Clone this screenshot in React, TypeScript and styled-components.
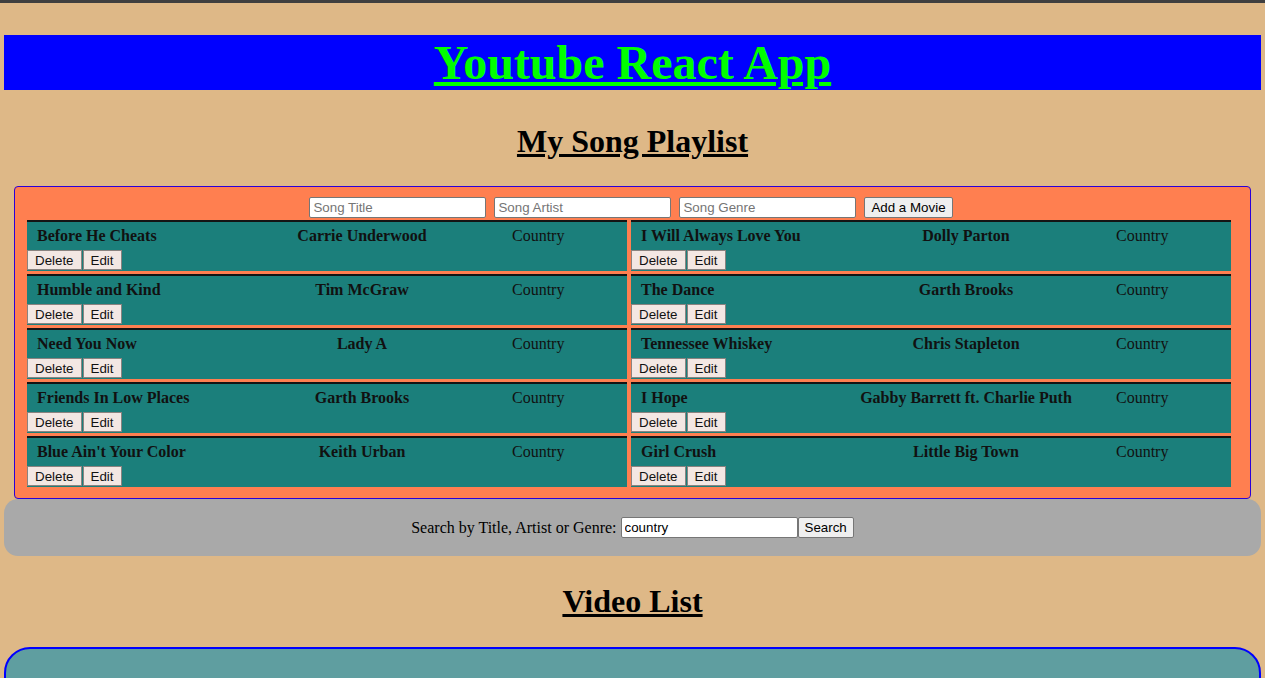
import { useState } from "react";
import styled, { createGlobalStyle } from "styled-components";

interface Song {
  title: string;
  artist: string;
  genre: string;
}

const GlobalStyle = createGlobalStyle`
  html, body {
    margin: 0;
    padding: 0;
    background: #deb887;
    font-family: "Liberation Serif", "Times New Roman", serif;
  }
`;

const TopEdge = styled.div`
  height: 3px;
  background: #3f3f3f;
`;

const Page = styled.div`
  padding: 32px 4px 0;
  display: flex;
  flex-direction: column;
`;

const Banner = styled.div`
  background: #0000ff;
  height: 55px;
  display: flex;
  align-items: center;
  justify-content: center;
`;

const BannerTitle = styled.h1`
  margin: 0;
  color: #00ff00;
  font-size: 48px;
  font-weight: 700;
  text-decoration: underline;
  line-height: 55px;
`;

const SectionTitle = styled.h2<{ $top: number; $bottom: number }>`
  margin: ${(p) => p.$top}px 0 ${(p) => p.$bottom}px;
  text-align: center;
  font-size: 32px;
  font-weight: 700;
  text-decoration: underline;
  line-height: 36px;
  color: #000;
`;

const Playlist = styled.div`
  margin: 0 10px;
  background: #ff7f50;
  border: 1px solid #2a00d8;
  border-radius: 4px;
  padding: 10px 15px 11px 12px;
  display: flex;
  flex-direction: column;
  gap: 2px;
`;

const AddForm = styled.form`
  display: flex;
  justify-content: center;
  gap: 8px;
`;

const TextInput = styled.input<{ $w?: number }>`
  width: ${(p) => p.$w ?? 177}px;
  height: 21px;
  box-sizing: border-box;
  border: 1px solid #767676;
  border-radius: 2px;
  padding: 1px 3px;
  font-family: "Liberation Sans", Arial, sans-serif;
  font-size: 13.33px;
  background: #fff;
  color: #000;
  &::placeholder {
    color: #757575;
  }
`;

const PlainButton = styled.button`
  height: 21px;
  box-sizing: border-box;
  border: 1px solid #767676;
  border-radius: 2px;
  background: #efefef;
  font-family: "Liberation Sans", Arial, sans-serif;
  font-size: 13.33px;
  padding: 1px 6px;
  color: #000;
`;

const SongGrid = styled.div`
  display: grid;
  grid-template-columns: 600px 600px;
  column-gap: 4px;
  row-gap: 3px;
`;

const SongCard = styled.div`
  background: #1b7f7b;
  border-top: 2px solid #141414;
  display: flex;
  flex-direction: column;
`;

const SongInfo = styled.div`
  display: grid;
  grid-template-columns: 205px 240px 1fr;
  padding-left: 10px;
  height: 28px;
  align-items: center;
  font-size: 16px;
  color: #111;
`;

const Cell = styled.span<{ $bold?: boolean; $center?: boolean; $indent?: number }>`
  font-weight: ${(p) => (p.$bold ? 700 : 400)};
  text-align: ${(p) => (p.$center ? "center" : "left")};
  padding-left: ${(p) => p.$indent ?? 0}px;
  white-space: nowrap;
`;

const ActionRow = styled.div`
  display: flex;
  align-items: flex-start;
  height: 21px;
  gap: 1px;
`;

const ActionButton = styled.button`
  height: 20px;
  box-sizing: border-box;
  border: 1px solid #8a8380;
  border-radius: 0;
  background: #f3e7e3;
  font-family: "Liberation Sans", Arial, sans-serif;
  font-size: 13.33px;
  color: #111;
  padding: 0 7px;
`;

const SearchBar = styled.div`
  background: #a9a9a9;
  border-radius: 14px;
  height: 57px;
  display: flex;
  align-items: center;
  justify-content: center;
  font-size: 16px;
  color: #000;
`;

const SearchLabel = styled.label`
  margin-right: 4px;
`;

const VideoPanel = styled.div`
  background: #5f9ea0;
  border: 2px solid #0000ff;
  border-radius: 26px;
  height: 60px;
`;

const songs: Song[] = [
  { title: "Before He Cheats", artist: "Carrie Underwood", genre: "Country" },
  { title: "I Will Always Love You", artist: "Dolly Parton", genre: "Country" },
  { title: "Humble and Kind", artist: "Tim McGraw", genre: "Country" },
  { title: "The Dance", artist: "Garth Brooks", genre: "Country" },
  { title: "Need You Now", artist: "Lady A", genre: "Country" },
  { title: "Tennessee Whiskey", artist: "Chris Stapleton", genre: "Country" },
  { title: "Friends In Low Places", artist: "Garth Brooks", genre: "Country" },
  { title: "I Hope", artist: "Gabby Barrett ft. Charlie Puth", genre: "Country" },
  { title: "Blue Ain't Your Color", artist: "Keith Urban", genre: "Country" },
  { title: "Girl Crush", artist: "Little Big Town", genre: "Country" },
];

export default function App() {
  const [query, setQuery] = useState("country");

  return (
    <>
      <GlobalStyle />
      <TopEdge />
      <Page>
        <Banner>
          <BannerTitle>Youtube React App</BannerTitle>
        </Banner>
        <SectionTitle $top={33} $bottom={27}>My Song Playlist</SectionTitle>
        <Playlist>
          <AddForm onSubmit={(e) => e.preventDefault()}>
            <TextInput placeholder="Song Title" />
            <TextInput placeholder="Song Artist" />
            <TextInput placeholder="Song Genre" />
            <PlainButton type="submit">Add a Movie</PlainButton>
          </AddForm>
          <SongGrid>
            {songs.map((song, index) => (
              <SongCard key={index}>
                <SongInfo>
                  <Cell $bold>{song.title}</Cell>
                  <Cell $bold $center>{song.artist}</Cell>
                  <Cell $indent={30}>{song.genre}</Cell>
                </SongInfo>
                <ActionRow>
                  <ActionButton>Delete</ActionButton>
                  <ActionButton>Edit</ActionButton>
                </ActionRow>
              </SongCard>
            ))}
          </SongGrid>
        </Playlist>
        <SearchBar>
          <SearchLabel>Search by Title, Artist or Genre:</SearchLabel>
          <TextInput value={query} onChange={(e) => setQuery(e.target.value)} />
          <PlainButton>Search</PlainButton>
        </SearchBar>
        <SectionTitle $top={27} $bottom={28}>Video List</SectionTitle>
        <VideoPanel />
      </Page>
    </>
  );
}
